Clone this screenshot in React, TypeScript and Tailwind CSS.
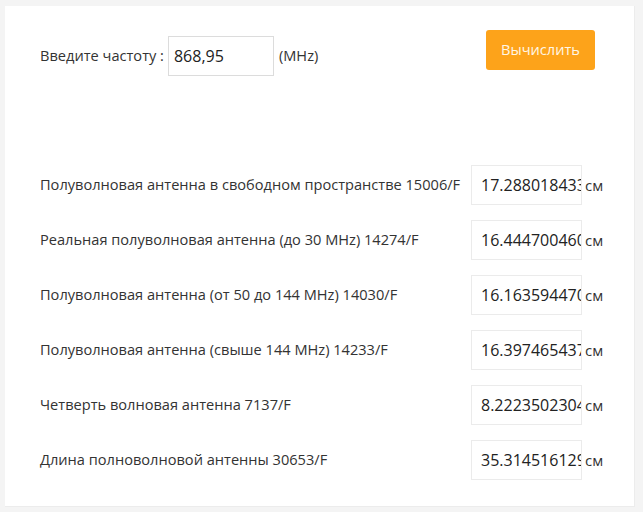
import React from 'react';

const rows = [
  { label: 'Полуволновая антенна в свободном пространстве 15006/F', value: '17.288018433179722' },
  { label: 'Реальная полуволновая антенна (до 30 MHz) 14274/F', value: '16.444700460829495' },
  { label: 'Полуволновая антенна (от 50 до 144 MHz) 14030/F', value: '16.163594470046083' },
  { label: 'Полуволновая антенна (свыше 144 MHz) 14233/F', value: '16.397465437788018' },
  { label: 'Четверть волновая антенна 7137/F', value: '8.222350230414746' },
  { label: 'Длина полноволновой антенны 30653/F', value: '35.314516129032256' },
];

export default function App() {
  return (
    <div className="h-[512px] w-[643px] bg-[#f4f4f4] pl-[5px] pt-[6px] font-['Open_Sans',sans-serif] text-[#333]">
      <div className="h-[501px] w-[630px] bg-white border-r border-b border-[#ececec] pl-[35px] pr-[39px] pt-[24px]">
        <div className="flex items-start">
          <div className="mt-[6px] flex items-center text-[14.6px]">
            <span>Введите частоту :</span>
            <input
              readOnly
              value="868,95"
              className="ml-[4px] h-[40px] w-[106px] border border-[#dcdcdc] pl-[5px] text-[16px] text-[#222] outline-none"
            />
            <span className="ml-[5px]">(MHz)</span>
          </div>
          <button className="ml-auto h-[40px] w-[109px] rounded-[3px] bg-[#fda31a] text-[14.6px] text-[#fff6e6]">
            Вычислить
          </button>
        </div>

        <div className="mt-[89px] flex w-[600px] flex-col gap-[15px]">
          {rows.map((r) => (
            <div key={r.label} className="flex h-[40px] items-center text-[14.6px]">
              <span className="w-[431px] shrink-0 whitespace-nowrap">{r.label}</span>
              <input
                readOnly
                value={r.value}
                className="h-[40px] w-[111px] shrink-0 border border-[#ebebeb] pl-[9px] pr-0 text-[16px] text-[#222] outline-none"
              />
              <span className="ml-[3px] text-[15px]">см</span>
            </div>
          ))}
        </div>
      </div>
    </div>
  );
}
